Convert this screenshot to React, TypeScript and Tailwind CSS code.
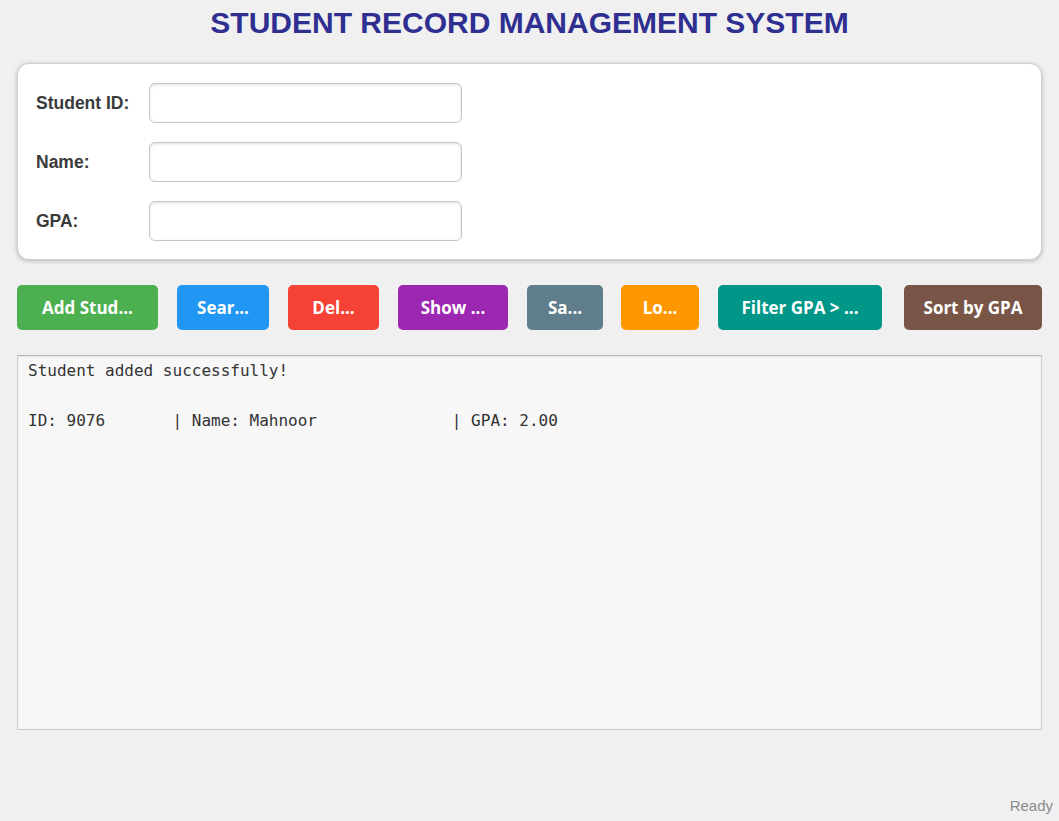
import React from "react";

const buttons = [
  { label: "Add Stud...", cls: "w-[141px] bg-[#4caf50]" },
  { label: "Sear...", cls: "ml-[19px] w-[92px] bg-[#2196f3]" },
  { label: "Del...", cls: "ml-[19px] w-[91px] bg-[#f44336]" },
  { label: "Show ...", cls: "ml-[19px] w-[110px] bg-[#9c27b0]" },
  { label: "Sa...", cls: "ml-[19px] w-[76px] bg-[#607d8b]" },
  { label: "Lo...", cls: "ml-[18px] w-[78px] bg-[#ff9800]" },
  { label: "Filter GPA > ...", cls: "ml-[19px] w-[164px] bg-[#009688]" },
  { label: "Sort by GPA", cls: "ml-auto w-[138px] bg-[#795548]" },
];

const fields = ["Student ID:", "Name:", "GPA:"];

export default function App() {
  const record =
    "ID: " + "9076".padEnd(10) + " | Name: " + "Mahnoor".padEnd(20) + " | GPA: 2.00";
  return (
    <div className="w-[1059px] h-[821px] bg-[#f0f0f0] flex flex-col px-[17px] font-['Liberation_Sans',Arial,sans-serif] overflow-hidden">
      <h1 className="pt-[6px] text-center text-[30px] leading-[34px] font-bold text-[#2f2f91]">
        STUDENT RECORD MANAGEMENT SYSTEM
      </h1>

      <div className="mt-[23px] h-[197px] bg-white rounded-[12px] border border-[#cfcfcf] shadow-[0_1px_4px_rgba(0,0,0,0.25)] pt-[19px] px-[18px] flex flex-col gap-[19px]">
        {fields.map((f) => (
          <div key={f} className="flex items-center">
            <div className="w-[113px] text-[17.5px] font-bold text-[#3a3a3a]">{f}</div>
            <div className="w-[313px] h-[40px] rounded-[6px] border border-[#c6c6c6] bg-white shadow-[inset_0_1px_3px_rgba(0,0,0,0.12)]" />
          </div>
        ))}
      </div>

      <div className="mt-[25px] flex">
        {buttons.map((b) => (
          <div
            key={b.label}
            className={`${b.cls} h-[45px] rounded-[5px] flex items-center justify-center text-white font-bold text-[17px] font-['Open_Sans',sans-serif] whitespace-nowrap`}
          >
            {b.label}
          </div>
        ))}
      </div>

      <div className="mt-[25px] h-[375px] bg-[#f7f7f7] border border-[#cdcdcd] border-t-[#b4b4b4] shadow-[inset_0_1px_2px_rgba(0,0,0,0.08)] pt-[2px] pl-[10px] font-['DejaVu_Sans_Mono',monospace] text-[16px] leading-[25px] text-[#333] whitespace-pre">
        <div>Student added successfully!</div>
        <div>{" "}</div>
        <div>{record}</div>
      </div>

      <div className="mt-auto mb-[4px] self-end -mr-[11px] text-[15px] text-[#8a8a8a]">Ready</div>
    </div>
  );
}
